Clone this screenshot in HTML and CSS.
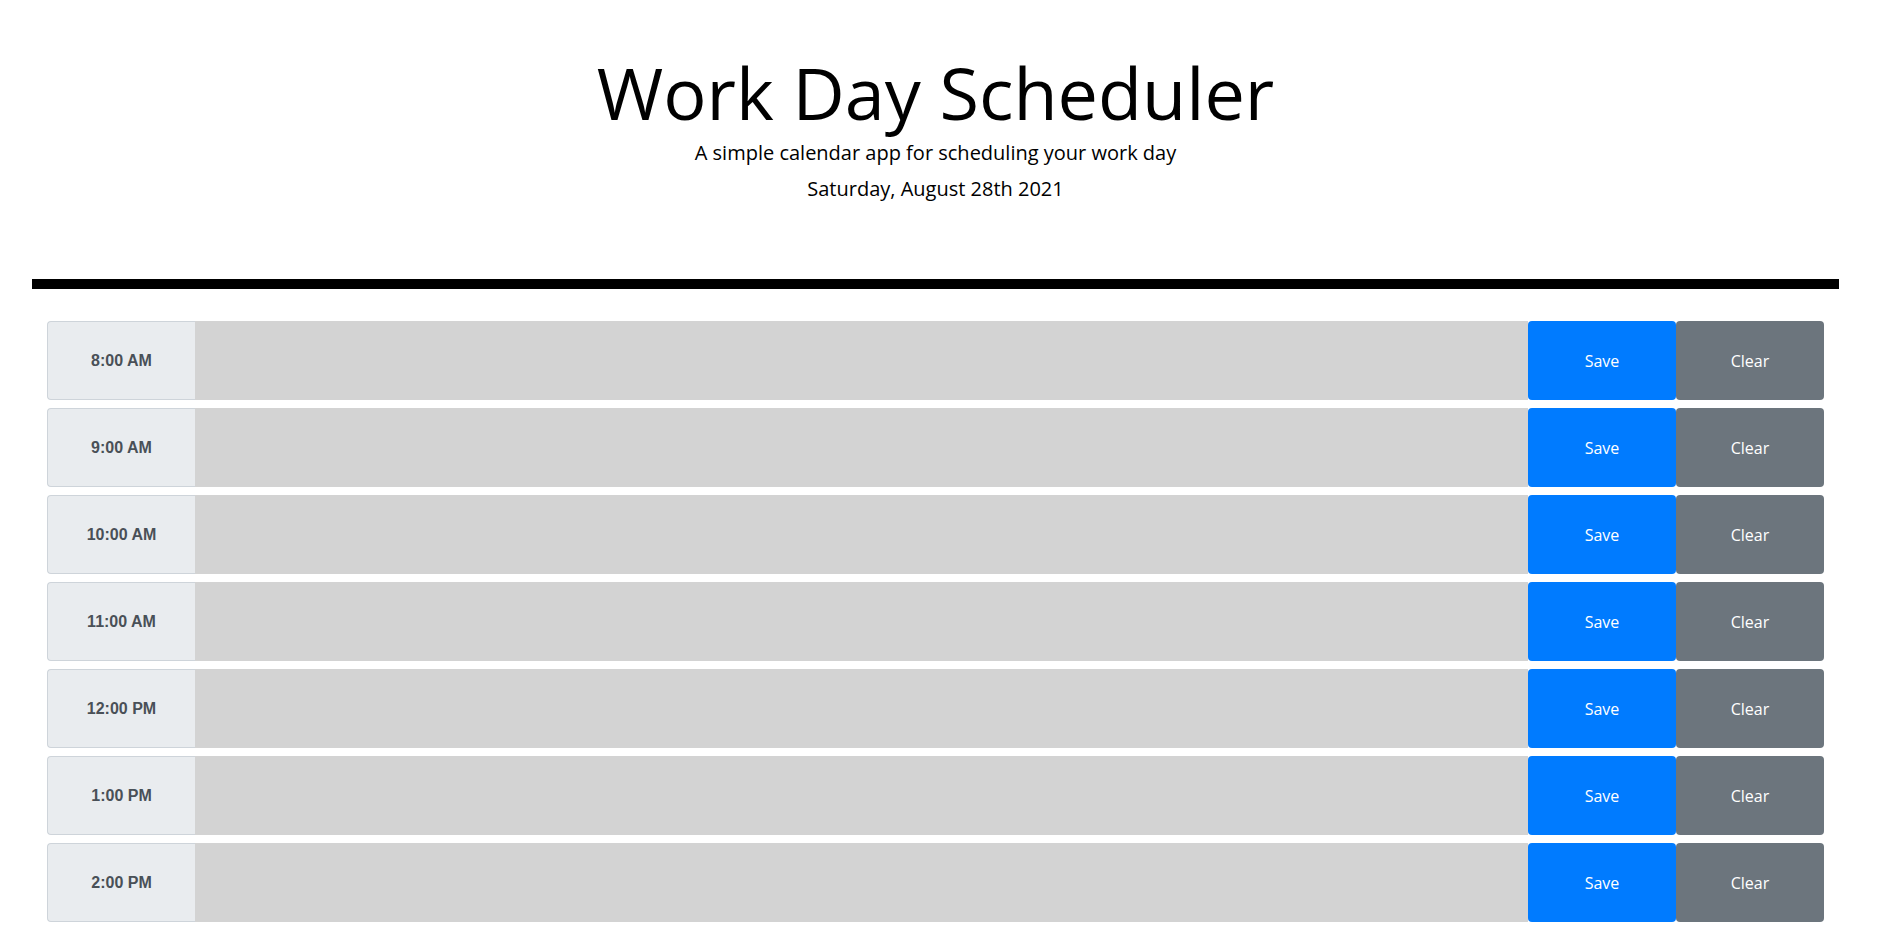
FILE: index.html
```html
<!DOCTYPE html>
<html lang="en">
<head>
<meta charset="utf-8">
<title>Work Day Scheduler</title>
<link rel="stylesheet" href="styles.css">
</head>
<body>
<header class="jumbotron">
  <h1 class="title">Work Day Scheduler</h1>
  <p class="lead">A simple calendar app for scheduling your work day</p>
  <p class="current-day">Saturday, August 28th 2021</p>
</header>
<main class="container">
  <div class="row">
    <div class="hour">8:00 AM</div>
    <textarea class="description"></textarea>
    <button class="btn save">Save</button>
    <button class="btn clear">Clear</button>
  </div>
  <div class="row">
    <div class="hour">9:00 AM</div>
    <textarea class="description"></textarea>
    <button class="btn save">Save</button>
    <button class="btn clear">Clear</button>
  </div>
  <div class="row">
    <div class="hour">10:00 AM</div>
    <textarea class="description"></textarea>
    <button class="btn save">Save</button>
    <button class="btn clear">Clear</button>
  </div>
  <div class="row">
    <div class="hour">11:00 AM</div>
    <textarea class="description"></textarea>
    <button class="btn save">Save</button>
    <button class="btn clear">Clear</button>
  </div>
  <div class="row">
    <div class="hour">12:00 PM</div>
    <textarea class="description"></textarea>
    <button class="btn save">Save</button>
    <button class="btn clear">Clear</button>
  </div>
  <div class="row">
    <div class="hour">1:00 PM</div>
    <textarea class="description"></textarea>
    <button class="btn save">Save</button>
    <button class="btn clear">Clear</button>
  </div>
  <div class="row">
    <div class="hour">2:00 PM</div>
    <textarea class="description"></textarea>
    <button class="btn save">Save</button>
    <button class="btn clear">Clear</button>
  </div>
</main>
</body>
</html>
```

FILE: styles.css
```css
html, body {
  margin: 0;
  padding: 0;
  background: #fff;
  font-family: "Open Sans", "Liberation Sans", sans-serif;
  color: #000;
}

.jumbotron {
  margin: 0 43px 0 32px;
  padding: 49px 0 0;
  height: 230px;
  border-bottom: 10px solid #000;
  text-align: center;
}

.title {
  margin: 0;
  font-size: 72px;
  font-weight: 400;
  line-height: 86.4px;
}

.lead {
  margin: 3px 0 0;
  font-size: 20px;
  line-height: 30px;
}

.current-day {
  margin: 6px 0 0;
  font-size: 20px;
  line-height: 30px;
}

.container {
  margin: 32px 58px 0 47px;
  display: flex;
  flex-direction: column;
  gap: 8px;
}

.row {
  display: flex;
  height: 79px;
}

.hour {
  box-sizing: border-box;
  flex: 0 0 148px;
  display: flex;
  align-items: center;
  justify-content: center;
  background: #e9ecef;
  border: 1px solid #ced4da;
  border-right: none;
  border-radius: 4px 0 0 4px;
  color: #495057;
  font-family: "Liberation Sans", Arial, sans-serif;
  font-weight: 700;
  font-size: 16px;
}

.description {
  flex: 1 1 auto;
  margin: 0;
  border: none;
  background: #d3d3d3;
  resize: none;
  font-family: inherit;
  font-size: 16px;
  padding: 6px 12px;
}

.btn {
  flex: 0 0 148px;
  margin: 0;
  border: none;
  border-radius: 4px;
  color: #fff;
  font-family: "Open Sans", sans-serif;
  font-size: 16px;
  cursor: pointer;
}

.save {
  background: #007bff;
}

.clear {
  background: #6c757d;
}
```
